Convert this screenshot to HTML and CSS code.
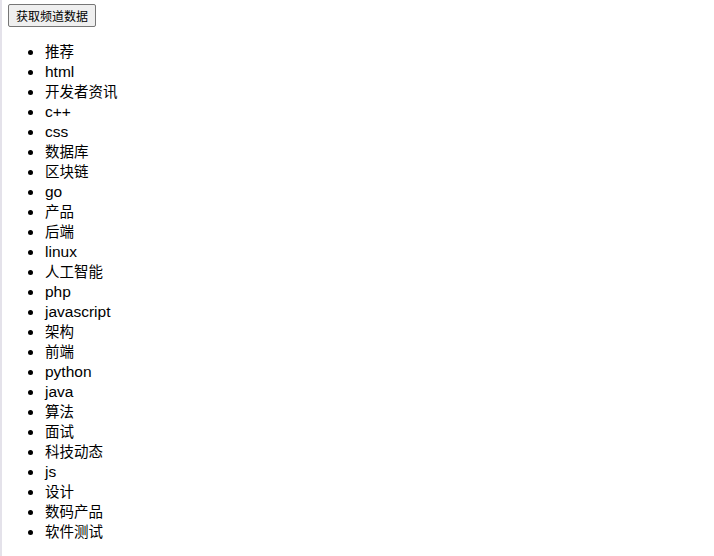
FILE: index.html
```html
<!DOCTYPE html>
<html lang="zh-CN">
<head>
<meta charset="utf-8">
<title>频道数据</title>
<link rel="stylesheet" href="styles.css">
</head>
<body>
<div class="page">
  <button class="fetch-btn" type="button">获取频道数据</button>
  <ul class="channel-list">
    <li class="zh">推荐</li>
    <li>html</li>
    <li class="zh">开发者资讯</li>
    <li>c++</li>
    <li>css</li>
    <li class="zh">数据库</li>
    <li class="zh">区块链</li>
    <li>go</li>
    <li class="zh">产品</li>
    <li class="zh">后端</li>
    <li>linux</li>
    <li class="zh">人工智能</li>
    <li>php</li>
    <li>javascript</li>
    <li class="zh">架构</li>
    <li class="zh">前端</li>
    <li>python</li>
    <li>java</li>
    <li class="zh">算法</li>
    <li class="zh">面试</li>
    <li class="zh">科技动态</li>
    <li>js</li>
    <li class="zh">设计</li>
    <li class="zh">数码产品</li>
    <li class="zh">软件测试</li>
  </ul>
</div>
</body>
</html>
```

FILE: styles.css
```css
html {
  min-height: 100%;
  box-shadow: inset 2px 0 0 #e4e2ea;
  background: #ffffff;
}

body {
  margin: 0;
  font-family: "Liberation Sans", "Noto Sans CJK SC", sans-serif;
  color: #000000;
}

.page {
  padding: 4px 0 0 8px;
}

.fetch-btn {
  display: block;
  margin: 0;
  height: 23px;
  padding: 0 7px;
  font-family: "Noto Sans CJK SC", sans-serif;
  font-size: 12px;
  line-height: 17px;
  color: #000000;
  background: #efefef;
  border: 1px solid #767676;
  border-radius: 2px;
}

.channel-list {
  margin: 15px 0 0 0;
  padding: 0 0 0 37px;
  list-style: none;
  font-size: 15.5px;
  line-height: 20px;
}

.channel-list li {
  position: relative;
  height: 20px;
}

.channel-list li::before {
  content: "";
  position: absolute;
  left: -17px;
  top: 8px;
  width: 5px;
  height: 5px;
  border-radius: 50%;
  background: #000000;
}

.channel-list .zh {
  font-size: 14.5px;
}
```
